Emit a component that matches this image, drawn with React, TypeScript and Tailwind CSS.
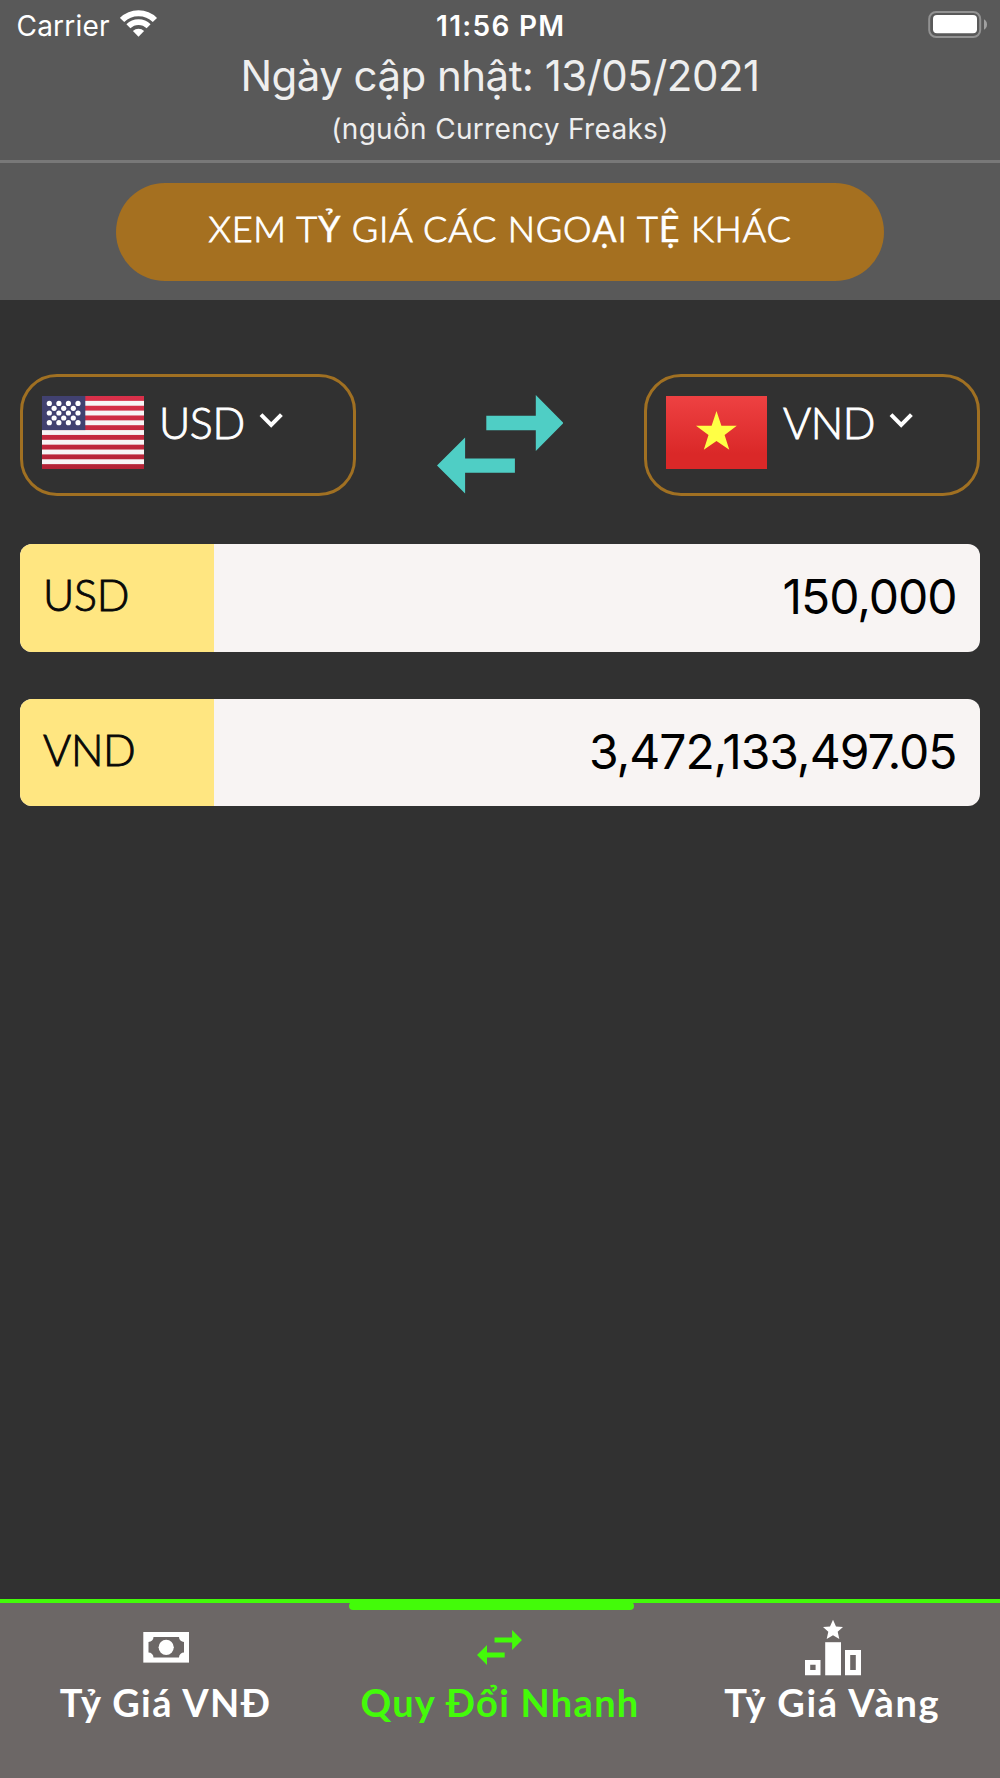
import React from "react";

function WifiIcon() {
  return (
    <svg className="mt-[9px] ml-[10.5px] h-[29px] w-[38px]" viewBox="0 0 38 29" fill="none" stroke="#fff">
      <path d="M2.1 11A23.2 23.2 0 0 1 34.9 11" strokeWidth="6" />
      <path d="M8.4 17.3A14.3 14.3 0 0 1 28.6 17.3" strokeWidth="5.6" />
      <path d="M12.9 21.9A8.2 8.2 0 0 1 24.1 21.9L18.5 27.8Z" fill="#fff" stroke="none" />
    </svg>
  );
}

function BatteryIcon() {
  return (
    <svg className="mt-[10px] h-[29px] w-[60px]" viewBox="0 0 60 29">
      <rect x="1.2" y="2" width="51" height="25" rx="7" fill="none" stroke="#929292" strokeWidth="2" />
      <rect x="5" y="5" width="44" height="18.3" rx="4" fill="#fff" />
      <path d="M56 9.3a6 6 0 0 1 0 10.4z" fill="#a0a0a0" />
    </svg>
  );
}

function SwapIcon({ className }: { className: string }) {
  return (
    <svg className={className} viewBox="0 0 126.6 98.6" fill="currentColor">
      <path d="M49.3 20.8H98.8V0L126.6 28L98.8 56V35.2H49.3Z" />
      <path d="M77.9 63.5H28.1V42.6L0 70.6L28.1 98.6V77.7H77.9Z" />
    </svg>
  );
}

function UsFlag() {
  const reds = [0, 2, 4, 6, 8, 10, 12, 14];
  return (
    <svg className="mt-[19px] h-[73px] w-[102px] shrink-0" viewBox="0 0 102 73">
      <defs>
        <linearGradient id="us-red" x1="0" y1="0" x2="0" y2="73" gradientUnits="userSpaceOnUse">
          <stop stopColor="#d9304a" />
          <stop offset="1" stopColor="#b22235" />
        </linearGradient>
      </defs>
      <rect width="102" height="73" fill="#f7f5f6" />
      {reds.map((i) => (
        <rect key={i} y={i * 4.867} width="102" height="4.867" fill="url(#us-red)" />
      ))}
      <rect width="43.3" height="34.07" fill="#414170" />
      {[7.4, 17, 26.7].map((y) => [7.3, 16.9, 26.4, 36].map((x) => <circle key={`${x}-${y}`} cx={x} cy={y} r="2.6" fill="#fff" />))}
      {[12.3, 22].map((y) => [12.1, 21.7, 31.3].map((x) => <circle key={`${x}-${y}`} cx={x} cy={y} r="2.6" fill="#fff" />))}
    </svg>
  );
}

function VnFlag() {
  return (
    <svg className="mt-[19px] h-[73px] w-[101px] shrink-0" viewBox="0 0 101 73">
      <defs>
        <linearGradient id="vn-red" x1="0" y1="0" x2="0" y2="1">
          <stop stopColor="#ee4142" />
          <stop offset="0.8" stopColor="#da2828" />
        </linearGradient>
      </defs>
      <rect width="101" height="73" fill="url(#vn-red)" />
      <path d="M50.5 15L55.4 29.7H70.8L58.6 38.9L63.3 53.8L50.5 44.9L37.8 53.8L42.5 38.9L30 29.7H45.6Z" fill="#ffff45" />
    </svg>
  );
}

function Chevron() {
  return (
    <svg className="mt-[35px] h-[18px] w-[24px]" viewBox="0 0 24 18" fill="none" stroke="#fff" strokeWidth="4">
      <path d="M2 2.7L12.2 13L22.4 2.7" />
    </svg>
  );
}

function CashIcon() {
  return (
    <svg className="mt-[29px] h-[31px] w-[46px]" viewBox="0 0 46 31">
      <rect x="0.3" width="45.7" height="30.6" fill="#fff" />
      <path d="M10.5 5H36A5 5 0 0 0 41 10V20.5A5 5 0 0 0 36 25.5H10.5A5 5 0 0 0 5.5 20.5V10A5 5 0 0 0 10.5 5Z" fill="#6c6766" />
      <circle cx="23.2" cy="15.3" r="7.6" fill="#fff" />
    </svg>
  );
}

function PodiumIcon() {
  return (
    <svg className="mt-[16px] h-[57px] w-[56px]" viewBox="0 0 56 57" fill="#fff" fillRule="evenodd">
      <path d="M28 0.8L31 7.4L38 8.1L32.7 12.8L34.3 20L28 16.3L21.7 20L23.3 12.8L18 8.1L25 7.4Z" />
      <path d="M0 41H15.5V56.3H0ZM5.2 45.8V51H10.6V45.8Z" />
      <path d="M20.2 23.2H36V56.3H20.2Z" />
      <path d="M40 31H56V56.3H40ZM45.2 36V51H50.8V36Z" />
    </svg>
  );
}

const light = "font-['Lato',sans-serif] font-light [-webkit-text-stroke:0.9px]";
const heavier = "font-normal [-webkit-text-stroke:0.4px]";

function AmountRow({ code, amount, className }: { code: string; amount: string; className: string }) {
  return (
    <div className={`flex overflow-hidden rounded-[12px] bg-[#f8f4f3] ${className}`}>
      <div className={`w-[194px] shrink-0 bg-[#ffe681] pl-[23px] text-[43px] leading-[102px] tracking-[-0.3px] text-[#080808] ${light}`}>{code}</div>
      <div className="flex-1 pr-[23.5px] text-right text-[48px] leading-[105px] tracking-[-1.04px] text-black">{amount}</div>
    </div>
  );
}

export default function App() {
  return (
    <div className="flex h-[1778px] w-[1000px] flex-col overflow-hidden bg-[#313131] font-['Inter',sans-serif] text-white">
      <header className="h-[300px] shrink-0 bg-[#595959]">
        <div className="grid h-[52px] grid-cols-3 text-[28px] leading-[52px]">
          <div className="flex pl-[16.5px] tracking-[0.2px]">
            Carrier
            <WifiIcon />
          </div>
          <div className="pl-[1.5px] text-center font-semibold tracking-[1.3px]">11:56 PM</div>
          <div className="flex justify-end pr-[12px]">
            <BatteryIcon />
          </div>
        </div>
        <div className="h-[111px] border-b-[3px] border-[#787878] text-center text-[#eeeeee]">
          <h1 className="text-[42px] leading-[47px] tracking-[-0.53px]">Ngày cập nhật: 13/05/2021</h1>
          <p className="text-[28px] leading-[60px] tracking-[0.32px]">(nguồn Currency Freaks)</p>
        </div>
        <button
          className={`mx-auto mt-[20px] block h-[98px] w-[768px] rounded-full bg-[#a57020] pb-[8px] text-center text-[36px] leading-[90px] tracking-[0.8px] whitespace-nowrap ${light}`}
        >
          XEM T<span className={heavier}>Ỷ</span> GIÁ CÁC NGO<span className={heavier}>Ạ</span>I T
          <span className={heavier}>Ệ</span> KHÁC
        </button>
      </header>

      <main className="flex-1 px-[20px] pt-[74px]">
        <div className="flex h-[122px] justify-between">
          <div className="flex w-[336px] items-start rounded-[37px] border-[3px] border-[#a07022] pl-[19px]">
            <UsFlag />
            <div className={`ml-[15px] w-[100px] text-[43px] leading-[91px] tracking-[-0.4px] ${light}`}>USD</div>
            <Chevron />
          </div>
          <SwapIcon className="mt-[21px] h-[98.6px] w-[126.6px] text-[#4fcec5]" />
          <div className="flex w-[336px] items-start rounded-[37px] border-[3px] border-[#a07022] pl-[19px]">
            <VnFlag />
            <div className={`ml-[16px] w-[106px] text-[43px] leading-[91px] tracking-[-0.4px] ${light}`}>VND</div>
            <Chevron />
          </div>
        </div>
        <AmountRow code="USD" amount="150,000" className="mt-[47.5px] h-[108px]" />
        <AmountRow code="VND" amount="3,472,133,497.05" className="mt-[47.5px] h-[107px]" />
      </main>

      <nav className="relative grid h-[179px] shrink-0 grid-cols-3 border-t-4 border-[#43fb09] bg-[#6c6766] text-center font-['Lato',sans-serif] text-[38px] leading-[45px] font-bold tracking-[1.28px]">
        <div className="absolute -top-px left-[349px] h-[8px] w-[285px] rounded-full bg-[#43fb09]" />
        <div className="pr-[2px] tracking-[1.45px]">
          <div className="flex h-[77px] justify-center">
            <CashIcon />
          </div>
          Tỷ Giá VNĐ
        </div>
        <div className="text-[#43fb09]">
          <div className="flex h-[77px] justify-center">
            <SwapIcon className="mt-[27px] h-[35px] w-[45px]" />
          </div>
          Quy Đổi Nhanh
        </div>
        <div className="pr-[2px] tracking-[1.7px]">
          <div className="flex h-[77px] justify-center pl-[2px]">
            <PodiumIcon />
          </div>
          Tỷ Giá Vàng
        </div>
      </nav>
    </div>
  );
}
